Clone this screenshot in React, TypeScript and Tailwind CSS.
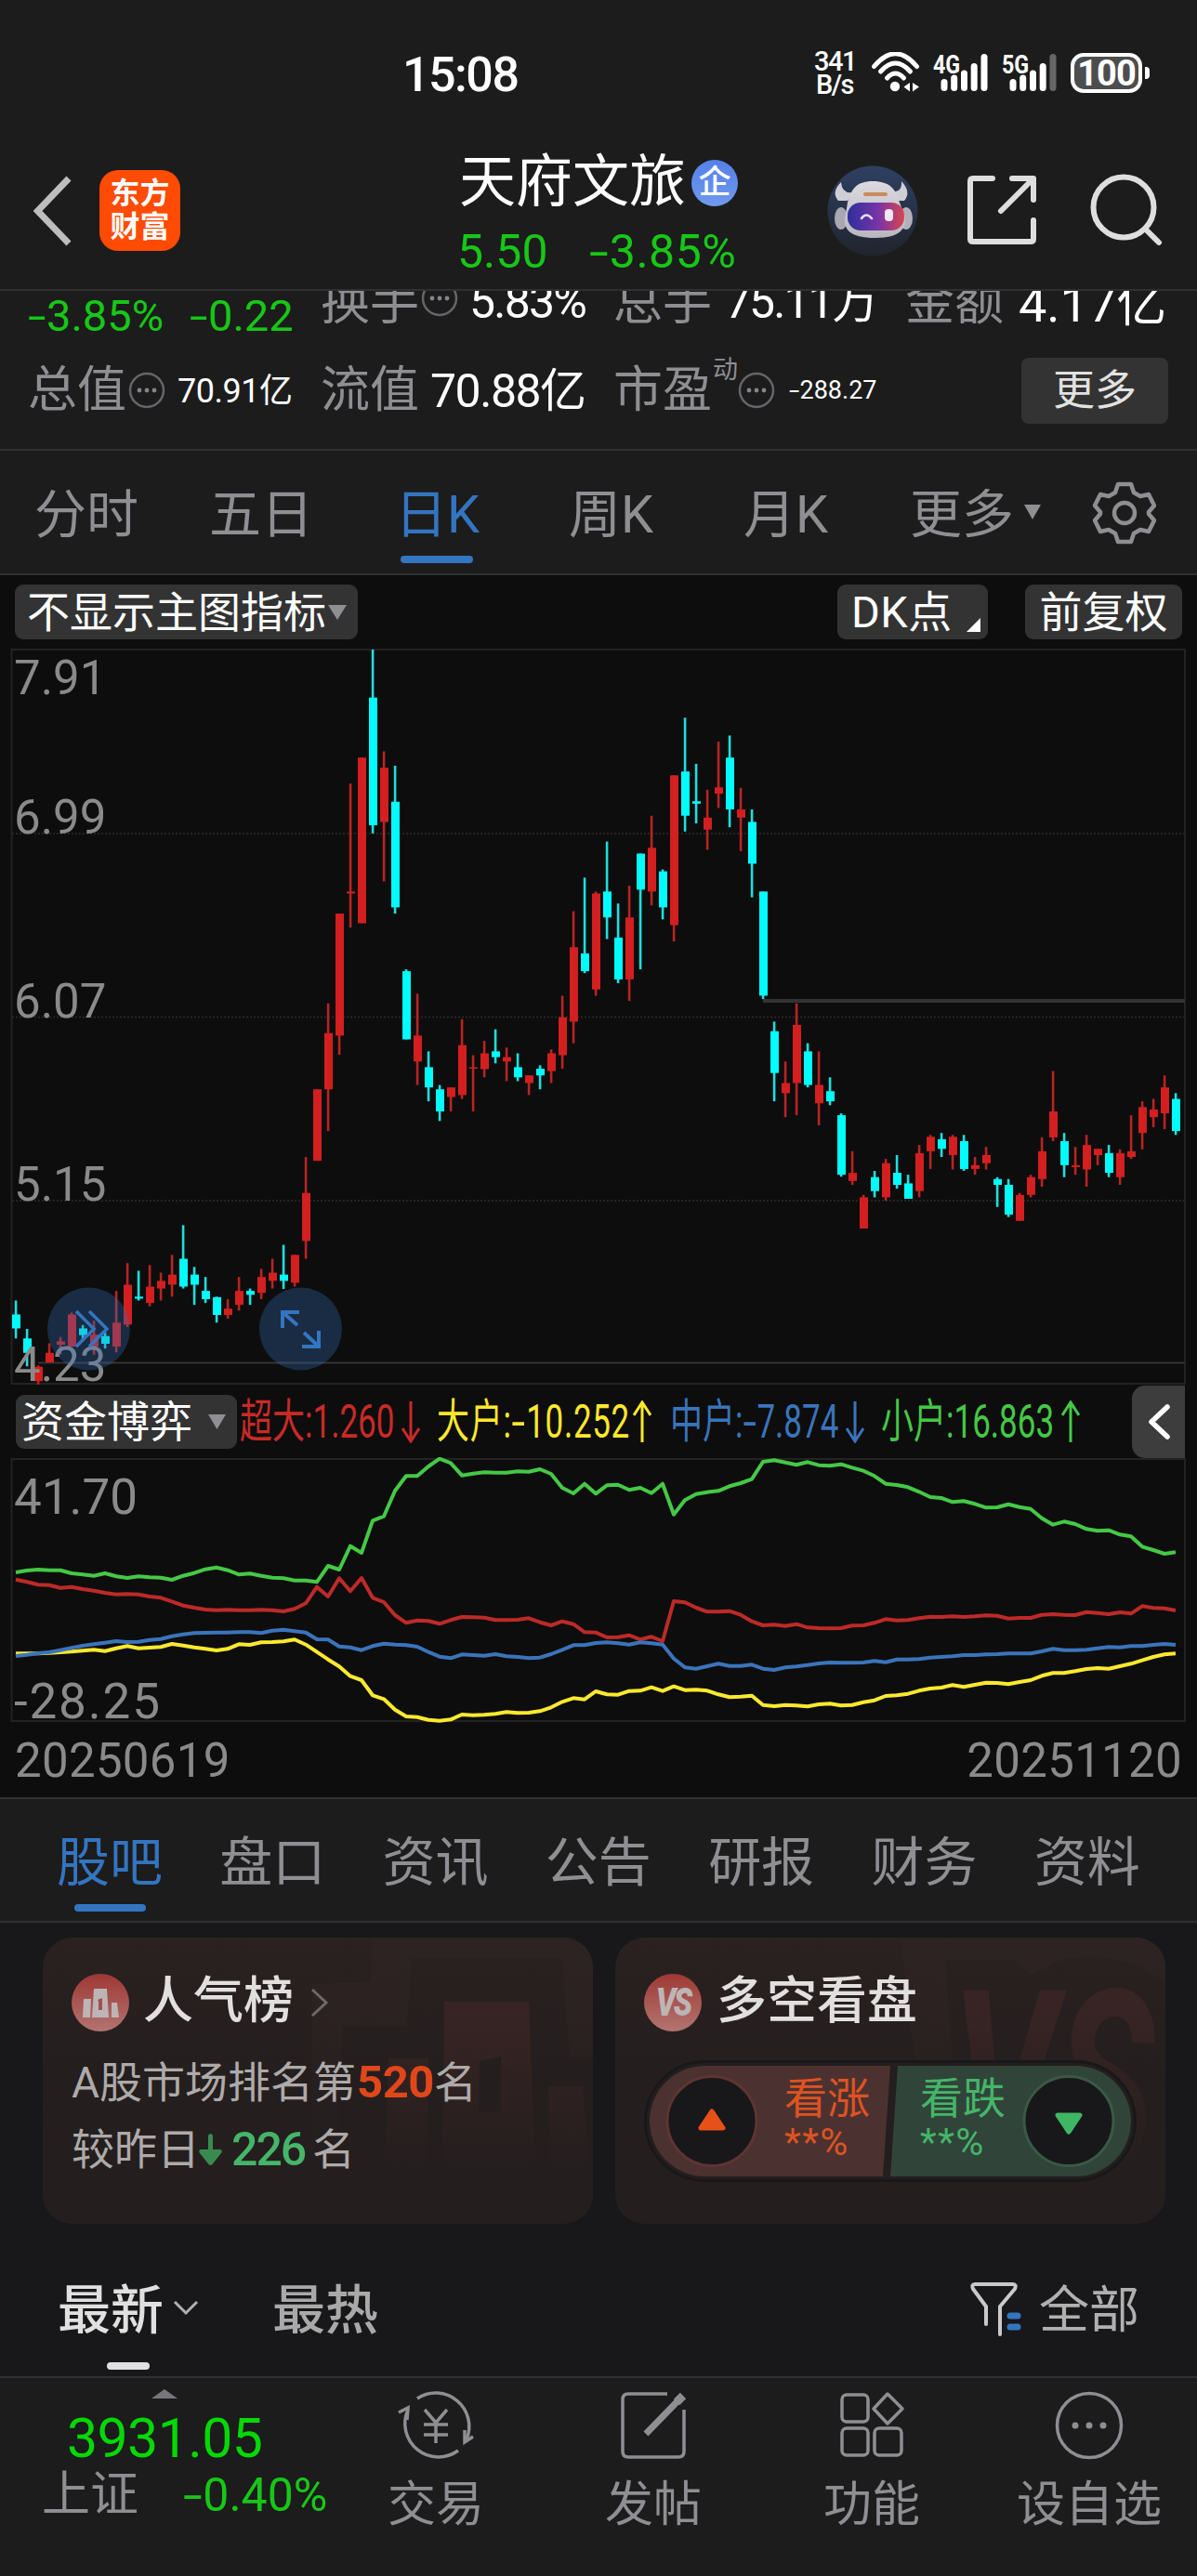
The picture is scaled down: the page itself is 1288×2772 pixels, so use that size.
import React from 'react';

// [up, high, body top, body bottom, low], one row per trading day
type Candle = [number, number, number, number, number];

const candles: Candle[] = [
  [0, 1373, 1402, 1431, 1452], [0, 1432, 1452, 1482, 1510], [1, 1508, 1511, 1541, 1548], [1, 1462, 1482, 1502, 1502],
  [1, 1449, 1458, 1465, 1485], [1, 1398, 1402, 1469, 1469], [0, 1424, 1431, 1445, 1455], [1, 1415, 1444, 1469, 1486],
  [0, 1440, 1447, 1463, 1473], [1, 1353, 1419, 1469, 1481], [1, 1295, 1340, 1423, 1428], [0, 1311, 1365, 1369, 1373],
  [1, 1299, 1344, 1378, 1385], [1, 1315, 1332, 1348, 1373], [1, 1278, 1319, 1340, 1365], [0, 1216, 1286, 1344, 1348],
  [0, 1303, 1319, 1340, 1382], [0, 1324, 1353, 1370, 1378], [0, 1365, 1366, 1403, 1419], [1, 1370, 1390, 1403, 1411],
  [1, 1324, 1353, 1382, 1394], [0, 1348, 1353, 1361, 1382], [1, 1307, 1324, 1357, 1370], [1, 1286, 1315, 1332, 1348],
  [0, 1257, 1319, 1332, 1349], [1, 1278, 1278, 1336, 1344], [1, 1074, 1149, 1249, 1286], [1, 933, 933, 1082, 1082],
  [1, 754, 816, 933, 1020], [1, 567, 567, 821, 861], [1, 296, 521, 525, 596], [1, 242, 242, 587, 587],
  [0, 17, 117, 383, 400], [1, 229, 263, 376, 500], [0, 259, 334, 554, 567], [0, 683, 687, 829, 829],
  [1, 734, 821, 875, 924], [0, 854, 887, 929, 958], [0, 924, 933, 979, 999], [1, 929, 929, 949, 979],
  [1, 787, 841, 945, 953], [1, 862, 887, 890, 979], [1, 832, 858, 891, 908], [0, 808, 854, 866, 879],
  [1, 846, 866, 875, 916], [0, 858, 887, 908, 916], [1, 904, 904, 920, 945], [0, 883, 890, 904, 933],
  [1, 850, 858, 895, 920], [1, 738, 783, 862, 890], [1, 562, 637, 792, 837], [0, 492, 650, 687, 691],
  [1, 521, 525, 725, 738], [0, 417, 521, 575, 620], [0, 546, 617, 704, 712], [1, 509, 575, 704, 749],
  [0, 442, 442, 517, 683], [1, 363, 430, 521, 550], [0, 475, 479, 554, 579], [1, 279, 279, 591, 625],
  [0, 159, 271, 363, 396], [0, 255, 333, 338, 379], [1, 309, 367, 392, 434], [1, 209, 304, 317, 347],
  [0, 196, 242, 350, 387], [1, 305, 350, 367, 437], [0, 350, 376, 463, 533], [0, 521, 521, 738, 745],
  [0, 792, 812, 899, 958], [1, 875, 920, 941, 991], [1, 754, 799, 920, 987], [0, 837, 854, 924, 929],
  [1, 854, 924, 962, 1008], [0, 908, 937, 958, 966], [0, 983, 987, 1111, 1115], [1, 1062, 1107, 1124, 1132],
  [1, 1153, 1158, 1223, 1223], [0, 1103, 1116, 1145, 1158], [1, 1078, 1087, 1158, 1165], [0, 1070, 1107, 1132, 1140],
  [0, 1111, 1129, 1161, 1161], [1, 1049, 1066, 1145, 1158], [1, 1028, 1032, 1062, 1099], [0, 1024, 1037, 1057, 1074],
  [1, 1028, 1032, 1070, 1100], [0, 1028, 1041, 1099, 1103], [1, 1074, 1091, 1099, 1111], [1, 1053, 1070, 1087, 1100],
  [0, 1116, 1120, 1132, 1178], [0, 1120, 1132, 1194, 1199], [1, 1149, 1153, 1207, 1207], [1, 1111, 1116, 1153, 1158],
  [1, 1033, 1062, 1120, 1136], [1, 895, 979, 1033, 1041], [0, 1024, 1041, 1091, 1116], [1, 1053, 1091, 1095, 1111],
  [1, 1028, 1049, 1100, 1136], [1, 1057, 1057, 1070, 1091], [0, 1049, 1066, 1107, 1116], [1, 1058, 1066, 1116, 1132],
  [1, 987, 1062, 1074, 1078], [1, 958, 970, 1024, 1058], [1, 953, 975, 991, 1012], [1, 904, 929, 983, 1016],
  [0, 941, 953, 1020, 1028],
];

const small = [
  636, 630, 627, 629, 629, 639, 643, 647, 639, 649, 654, 649, 652, 653, 660, 647, 638, 626, 620, 629, 643, 640, 647, 653, 655, 662,
  662, 667, 615, 627, 551, 573, 469, 455, 373, 325, 325, 294, 269, 283, 323, 317, 313, 314, 314, 310, 311, 303, 318, 363, 381, 350,
  382, 355, 353, 370, 363, 380, 350, 449, 403, 383, 377, 373, 358, 348, 335, 279, 274, 281, 289, 280, 290, 292, 287, 298, 308, 325,
  350, 354, 361, 376, 393, 396, 409, 406, 415, 427, 426, 416, 425, 431, 461, 482, 472, 480, 496, 502, 500, 514, 520, 553, 564, 576, 571,
];
const huge = [
  659, 667, 676, 677, 686, 683, 690, 695, 702, 707, 706, 707, 714, 718, 730, 743, 750, 756, 758, 757, 758, 758, 757, 758, 762, 754,
  736, 683, 714, 655, 697, 654, 718, 732, 774, 799, 791, 793, 802, 790, 780, 781, 782, 790, 790, 789, 784, 797, 807, 794, 803, 829,
  830, 846, 845, 839, 853, 844, 858, 729, 733, 750, 763, 763, 761, 773, 794, 807, 805, 809, 803, 814, 816, 817, 816, 808, 807, 799,
  787, 791, 790, 784, 779, 780, 778, 780, 778, 775, 776, 785, 783, 783, 773, 771, 773, 774, 764, 767, 771, 765, 769, 745, 751, 752, 759,
];
const medium = [
  906, 902, 897, 894, 887, 880, 873, 868, 863, 858, 861, 860, 854, 851, 842, 836, 832, 831, 830, 830, 829, 829, 832, 824, 821, 826,
  830, 852, 853, 875, 878, 887, 874, 866, 869, 871, 876, 893, 908, 913, 901, 903, 905, 900, 907, 909, 913, 911, 900, 886, 871, 871,
  864, 862, 865, 869, 862, 865, 869, 914, 943, 947, 939, 931, 938, 938, 934, 947, 951, 943, 940, 935, 930, 927, 928, 928, 927, 922,
  926, 917, 917, 916, 911, 909, 907, 903, 903, 901, 900, 898, 898, 898, 891, 883, 887, 887, 886, 881, 877, 878, 874, 874, 870, 867, 870,
];
const large = [
  898, 898, 898, 896, 894, 892, 889, 886, 890, 881, 874, 881, 879, 877, 867, 872, 878, 883, 888, 883, 868, 870, 862, 861, 859, 853,
  869, 893, 917, 940, 971, 984, 1033, 1045, 1079, 1101, 1103, 1112, 1115, 1111, 1095, 1097, 1096, 1093, 1087, 1090, 1089, 1084, 1072,
  1054, 1042, 1046, 1020, 1030, 1031, 1019, 1018, 1007, 1019, 1004, 1016, 1015, 1018, 1030, 1039, 1037, 1034, 1064, 1068, 1064, 1066,
  1069, 1062, 1060, 1066, 1064, 1055, 1049, 1035, 1033, 1028, 1018, 1011, 1008, 1000, 1006, 999, 992, 993, 997, 990, 984, 970, 961,
  961, 955, 948, 945, 947, 939, 931, 920, 909, 901, 898,
];

const dayX = (i: number) => 17 + i * 12;
const priceY = (v: number) => (v - 17) / 1.9358 + 1;
const flowPoints = (values: number[]) => values.map((v, i) => `${dayX(i)},${((v - 270) / 3 + 2).toFixed(1)}`).join(' ');

// Roboto's hyphen is too short for a minus sign
function Neg() {
  return <span className="mr-[.15em] inline-block origin-left scale-x-[1.5]">-</span>;
}

function Dots({ className }: { className: string }) {
  return (
    <svg width="40" height="40" viewBox="0 0 40 40" className={className}>
      <circle cx="20" cy="20" r="18" fill="none" stroke="#65656a" strokeWidth="2.5" />
      <circle cx="12" cy="20" r="2.4" fill="#85858a" />
      <circle cx="20" cy="20" r="2.4" fill="#85858a" />
      <circle cx="28" cy="20" r="2.4" fill="#85858a" />
    </svg>
  );
}

function Signal({ label, weak }: { label: string; weak?: boolean }) {
  return (
    <div className="relative h-[44px] w-[60px]">
      <span className="absolute left-0 top-0 origin-left scale-x-[.83] text-[28px] font-bold leading-none">{label}</span>
      <svg width="60" height="44" viewBox="0 0 60 44" className="absolute left-0 top-0">
        <rect x="8.500" y="29" width="7" height="13" rx="3.500" fill="#fff" />
        <rect x="19.200" y="24.500" width="7" height="17.500" rx="3.500" fill="#fff" />
        <rect x="30" y="19.500" width="7" height="22.500" rx="3.500" fill="#fff" />
        <rect x="40.700" y="12" width="7" height="30" rx="3.500" fill="#fff" />
        <rect x="51.500" y="2" width="7" height="40" rx="3.500" fill={weak ? '#666' : '#fff'} />
      </svg>
    </div>
  );
}

function StatusBar() {
  return (
    <div className="flex h-[140px] items-start text-white">
      <div className="ml-[433px] mt-[55px] w-[443px] text-[52px] font-medium leading-none tracking-[-1.500px]">15:08</div>
      <div className="mt-[54px] w-[62px] text-[29px] font-medium leading-[25px] tracking-[-1.500px]">
        <div>341</div>
        <div className="pl-[2px]">B/s</div>
      </div>
      <svg width="52" height="44" viewBox="0 0 52 44" className="mt-[56px]" fill="none" stroke="#fff" strokeWidth="5" strokeLinecap="round">
        <path d="M2.500 18.500 Q25.500 -9 48.500 18.500" transform="translate(0 -3)" />
        <path d="M9.500 22 Q25.500 4 41.500 22" transform="translate(0 -1)" />
        <path d="M16.500 28 Q25.500 18 34.500 28" />
        <circle cx="25" cy="37" r="5.200" fill="#fff" stroke="none" />
        <path d="M41 33v9.500l-6.500-5zM44 33v9.500l7-5z" fill="#fff" stroke="none" />
      </svg>
      <div className="ml-[14px] mt-[56px]"><Signal label="4G" /></div>
      <div className="ml-[14px] mt-[56px]"><Signal label="5G" weak /></div>
      <div className="ml-[14px] mt-[57px] flex h-[43px] w-[77px] items-center justify-center rounded-[14px] border-[4px] border-white bg-[#4d4d4d] text-[38px] font-bold leading-none tracking-[-1px]">
        100
      </div>
      <div className="ml-[3px] mt-[72px] h-[13px] w-[5px] rounded-r-[4px] bg-white" />
    </div>
  );
}

function Robot() {
  return (
    <svg width="98" height="98" viewBox="0 0 98 98">
      <defs>
        <linearGradient id="sky" x1="0" y1="0" x2="0" y2="1">
          <stop offset="0" stopColor="#2e4063" />
          <stop offset="1" stopColor="#20242d" />
        </linearGradient>
        <linearGradient id="visor" x1="0" y1="0" x2="1" y2="0">
          <stop offset="0" stopColor="#2b2f9c" />
          <stop offset=".55" stopColor="#7a34a8" />
          <stop offset="1" stopColor="#d8454f" />
        </linearGradient>
        <linearGradient id="shell" x1="0" y1="0" x2="0" y2="1">
          <stop offset="0" stopColor="#dcdae0" />
          <stop offset="1" stopColor="#b9b6be" />
        </linearGradient>
      </defs>
      <circle cx="49" cy="49" r="48.500" fill="url(#sky)" />
      <ellipse cx="15" cy="57" rx="7" ry="12" fill="#a9a7b2" />
      <ellipse cx="85" cy="57" rx="7" ry="12" fill="#b3b0ba" />
      <path d="M15 18 Q4 29 12 38 L22 38 L28 29 Q16 31 15 18Z" fill="#d0ced5" />
      <path d="M80 17 Q91 29 83 38 L73 38 L68 28 Q81 30 80 17Z" fill="#d0ced5" />
      <path d="M49 17 C68 17 74 26 78 40 L84 56 C85 70 76 78 52 78 C30 78 18 72 19 58 L22 40 C26 26 31 17 49 17Z" fill="url(#shell)" />
      <rect x="39" y="29" width="26" height="4" rx="2" fill="#c98a5c" />
      <rect x="22" y="40" width="61" height="30" rx="14" fill="url(#visor)" />
      <path d="M37 57 Q42 50 48 57" fill="none" stroke="#dfe0ff" strokeWidth="2.600" strokeLinecap="round" />
      <rect x="62" y="47" width="9" height="13" rx="4" fill="#f1e6f2" />
    </svg>
  );
}

function Header() {
  return (
    <header className="flex h-[173px] items-start border-b-2 border-[#303032]">
      <svg width="44" height="76" viewBox="0 0 44 76" className="ml-[34px] mt-[49px]" fill="none" stroke="#bdbdbd" strokeWidth="7">
        <path d="M40 3 L6.500 38 L40 73" />
      </svg>
      <div className="ml-[29px] mt-[43px] h-[87px] w-[87px] rounded-[20px] bg-[#ff4b04] pt-[7px] text-center text-[32px] font-bold leading-[36px] text-white">
        <div>东方</div>
        <div>财富</div>
      </div>
      <div className="ml-[300px] mt-[26px] w-[396px]">
        <div className="flex items-center">
          <span className="w-[244px] text-[61px] leading-none text-white">天府文旅</span>
          <span className="ml-[6px] flex h-[50px] w-[50px] items-center justify-center rounded-full bg-linear-to-b from-[#5580e8] to-[#7099ee] pb-[1px] text-[35px] font-medium leading-none text-white">
            企
          </span>
        </div>
        <div className="mt-[19px] flex text-[50px] leading-none text-[#17c717]">
          <span className="ml-[-2px] w-[142px]">5.50</span>
          <span className="tracking-[.5px]"><Neg />3.85%</span>
        </div>
      </div>
      <div className="mt-[38px]"><Robot /></div>
      <svg width="80" height="80" viewBox="0 0 80 80" className="ml-[50px] mt-[47px]" fill="none" stroke="#dedede" strokeWidth="6" strokeLinecap="round" strokeLinejoin="round">
        <path d="M30 5 H9 Q6 5 6 8 V70 Q6 73 9 73 H71 Q74 73 74 70 V50" />
        <path d="M51 5 H74 V28 M73 6 L39 40" />
      </svg>
      <svg width="84" height="84" viewBox="0 0 84 84" className="ml-[53px] mt-[44px]" fill="none" stroke="#dedede" strokeWidth="6" strokeLinecap="round">
        <circle cx="38" cy="39" r="32.500" />
        <path d="M62 63 L76 77" />
      </svg>
    </header>
  );
}

function Quotes() {
  return (
    <section className="h-[172px] overflow-hidden border-b-2 border-[#303032] text-[53px] leading-none text-[#8e8e93]">
      <div className="-mt-[13px] flex h-[84px] items-start whitespace-nowrap">
        <div className="ml-[30px] mt-[16px] flex w-[315px] text-[47px] text-[#17c717]">
          <span className="w-[174px]"><Neg />3.85%</span>
          <span><Neg />0.22</span>
        </div>
        <span>换手</span>
        <Dots className="ml-[2px] mt-[1px]" />
        <span className="ml-[12px] w-[155px] text-[50px] tracking-[-1.800px] text-white">5.83%</span>
        <span className="w-[120px]">总手</span>
        <span className="w-[194px] text-[50px] tracking-[-2px] text-white">75.11万</span>
        <span className="w-[122px]">金额</span>
        <span className="mt-[1px] text-[54px] text-white">4.17亿</span>
      </div>
      <div className="flex h-[73px] items-center whitespace-nowrap">
        <span className="ml-[30px]">总值</span>
        <Dots className="mb-[2px] ml-[2px]" />
        <span className="ml-[13px] w-[154px] text-[36px] tracking-[-.5px] text-white">70.91亿</span>
        <span className="w-[118px]">流值</span>
        <span className="w-[197px] text-[50px] tracking-[-1.500px] text-white">70.88亿</span>
        <span>市盈</span>
        <span className="mb-[44px] ml-[1px] text-[27px]">动</span>
        <Dots className="mb-[2px]" />
        <span className="ml-[15px] w-[250px] text-[27px] text-white"><Neg />288.27</span>
        <span className="flex h-[71px] w-[158px] items-center justify-center rounded-[8px] bg-[#333] text-[45px] text-[#e2e2e2]">更多</span>
      </div>
    </section>
  );
}

function PeriodTabs() {
  return (
    <nav className="flex h-[134px] items-start border-b-2 border-[#303032] pt-[41px] text-[56px] leading-none text-[#8e8e93]">
      <span className="ml-[37px] w-[188px]">分时</span>
      <span className="w-[200px]">五日</span>
      <span className="flex w-[187px] flex-col text-[#3375c0]">
        日K
        <i className="ml-[6px] mt-[16px] h-[8px] w-[78px] rounded-full bg-[#3375c0]" />
      </span>
      <span className="w-[188px]">周K</span>
      <span className="w-[179px]">月K</span>
      <span className="w-[123px]">更多</span>
      <svg width="18" height="16" viewBox="0 0 18 16" className="mt-[17px]"><path d="M0 0h18l-9 16z" fill="#8e8e93" /></svg>
      <svg width="68" height="68" viewBox="0 0 68 68" className="ml-[56px] mt-[-8px]" fill="none" stroke="#8e8e93" strokeWidth="4.500" strokeLinejoin="round">
        <path d="M27 3 H41 L44 12 L51 16 L60 14 L66 26 L60 33 V35 L66 42 L60 54 L51 52 L44 56 L41 65 H27 L24 56 L17 52 L8 54 L2 42 L8 35 V33 L2 26 L8 14 L17 16 L24 12 Z" />
        <circle cx="34" cy="34" r="11" />
      </svg>
    </nav>
  );
}

function CandleChart() {
  const labels: [string, number][] = [['7.91', 49], ['6.99', 199], ['6.07', 397], ['5.15', 594], ['4.23', 788]];
  return (
    <svg width="1288" height="792" viewBox="0 0 1288 792" className="block">
      <rect x="12.500" y="1" width="1262.500" height="790" fill="none" stroke="#232323" strokeWidth="2" />
      {[199, 396.500, 594].map((y) => (
        <line key={y} x1="13" x2="1275" y1={y} y2={y} stroke="#2c2c2c" strokeWidth="1.500" strokeDasharray="2 2" />
      ))}
      <rect x="821" y="377" width="454" height="4" fill="#333" />
      <rect x="41" y="767.500" width="1234" height="2" fill="#333" />
      {candles.map(([up, high, top, bottom, low], i) => {
        const x = dayX(i);
        return (
          <g key={i}>
            <rect x={x - 1.200} y={priceY(high)} width="2.600" height={priceY(low) - priceY(high)} fill={up ? '#b82424' : '#1fdede'} />
            <rect x={x - 4} y={priceY(top)} width="9" height={priceY(bottom) - priceY(top)} fill={up ? '#d31f1f' : '#00fdfd'} />
          </g>
        );
      })}
      {labels.map(([text, y]) => (
        <text key={text} x="15" y={y} fontSize="51" fill="#8a8a8a">{text}</text>
      ))}
      <g fill="none" stroke="#3375c0" strokeWidth="3.500">
        <circle cx="95.500" cy="732" r="44.500" fill="rgba(54,113,188,.32)" stroke="none" />
        <path d="M82 713 L101 732 L82 751 M96 713 L115 732 L96 751" />
        <circle cx="323.500" cy="732" r="44.500" fill="rgba(54,113,188,.32)" stroke="none" />
        <path d="M304 731 V714 H322 M304 714 L320 728 M325 751 H343 V734 M343 751 L327 736" strokeWidth="4" />
      </g>
    </svg>
  );
}

type FlowLabelProps = { name: string; value: string; negative?: boolean; up?: boolean; box: string; arrow: string };

function FlowLabel({ name, value, negative, up, box, arrow }: FlowLabelProps) {
  return (
    <div className={`relative shrink-0 ${box}`}>
      <span className="block origin-left scale-x-[.7] whitespace-nowrap text-[50px] leading-none">
        {name}:{negative && <Neg />}{value}
      </span>
      <svg width="20" height="46" viewBox="0 0 20 46" className={`absolute top-[2px] ${arrow}`} fill="none" stroke="currentColor" strokeWidth="3">
        <path d={up ? 'M10 45 V2 M1 16 L10 2 L19 16' : 'M10 1 V44 M1 30 L10 44 L19 30'} />
      </svg>
    </div>
  );
}

function Charts() {
  return (
    <section className="bg-[#0d0d0d]">
      <div className="flex h-[79px] items-start pt-[10px] text-[46px] leading-none text-white">
        <div className="ml-[16px] flex h-[59px] w-[369px] items-center rounded-[9px] bg-[#333] pl-[13px]">
          <span>不显示主图指标</span>
          <svg width="20" height="16" viewBox="0 0 20 16" className="ml-[2px] shrink-0"><path d="M0 0h20l-10 16z" fill="#8e8e93" /></svg>
        </div>
        <div className="ml-[516px] flex h-[59px] w-[162px] items-center rounded-[9px] bg-[#333] pl-[15px]">
          <span className="w-[124px] text-[47px] tracking-[.5px]">DK点</span>
          <svg width="15" height="15" viewBox="0 0 15 15" className="mt-[28px]"><path d="M15 0v15H0z" fill="#fff" /></svg>
        </div>
        <div className="ml-[40px] flex h-[59px] w-[169px] items-center justify-center rounded-[9px] bg-[#333]">
          <span>前复权</span>
        </div>
      </div>
      <CandleChart />
      <div className="flex h-[78px] items-start">
        <div className="ml-[17px] mt-[11px] flex h-[58px] w-[238px] items-center rounded-[9px] bg-[#333] pl-[6px] text-[46px] leading-none text-white">
          <span className="w-[201px]">资金博弈</span>
          <svg width="19" height="16" viewBox="0 0 19 16"><path d="M0 0h19l-9.500 16z" fill="#8e8e93" /></svg>
        </div>
        <div className="ml-[3px] mt-[15px] flex w-[960px]">
          <div className="text-[#c92a26]"><FlowLabel name="超大" value="1.260" box="w-[212px]" arrow="left-[174px]" /></div>
          <div className="tracking-[1px] text-[#fde82c]"><FlowLabel name="大户" value="10.252" negative up box="w-[251px]" arrow="left-[211px]" /></div>
          <div className="text-[#3a74bb]"><FlowLabel name="中户" value="7.874" negative box="w-[227px]" arrow="left-[189px]" /></div>
          <div className="text-[#45c846]"><FlowLabel name="小户" value="16.863" up box="w-[220px]" arrow="left-[194px]" /></div>
        </div>
        <div className="mt-[1px] flex h-[78px] w-[57px] items-center justify-center rounded-l-[14px] bg-[#3d3d3d]">
          <svg width="26" height="40" viewBox="0 0 26 40" fill="none" stroke="#fff" strokeWidth="5.500" strokeLinecap="round" strokeLinejoin="round">
            <path d="M22 4 L5 20 L22 36" />
          </svg>
        </div>
      </div>
      <svg width="1288" height="288" viewBox="0 0 1288 288" className="block">
        <rect x="12.500" y="2" width="1262.500" height="282" fill="none" stroke="#232323" strokeWidth="2" />
        <text x="15" y="60.500" fontSize="53" fill="#8a8a8a">41.70</text>
        <text x="15" y="281" fontSize="53" fill="#8a8a8a" textLength="157">-28.25</text>
        <g fill="none" strokeWidth="4" strokeLinejoin="round">
          <polyline points={flowPoints(huge)} stroke="#bd2a28" />
          <polyline points={flowPoints(large)} stroke="#fbe92e" />
          <polyline points={flowPoints(medium)} stroke="#3a74bb" />
          <polyline points={flowPoints(small)} stroke="#45c846" />
        </g>
      </svg>
      <div className="flex h-[78px] justify-between px-[16px] pt-[13px] text-[51px] leading-none tracking-[.3px] text-[#8a8a8a]">
        <span>20250619</span>
        <span>20251120</span>
      </div>
    </section>
  );
}

function SectionTabs() {
  const tabs = ['盘口', '资讯', '公告', '研报', '财务', '资料'];
  return (
    <nav className="flex h-[135px] items-start border-y-2 border-[#303032] pl-[61px] pt-[40px] text-[57px] leading-none text-[#8e8e93]">
      <span className="w-[175.500px] text-[#3375c0]">
        股吧
        <i className="ml-[19px] mt-[16px] block h-[8px] w-[77px] rounded-full bg-[#3375c0]" />
      </span>
      {tabs.map((tab) => (
        <span key={tab} className="w-[175.500px]">{tab}</span>
      ))}
    </nav>
  );
}

function RankCard() {
  return (
    <div className="relative h-[308px] w-[592px] overflow-hidden rounded-[32px] bg-linear-to-b from-[#2a2120] via-[#241e1e] to-[#241f1e]">
      <svg width="592" height="308" viewBox="0 0 592 308" className="absolute left-0 top-0">
        <defs>
          <linearGradient id="bars" x1="0" y1="68" x2="0" y2="250" gradientUnits="userSpaceOnUse">
            <stop offset="0" stopColor="#392424" />
            <stop offset="1" stopColor="#392424" stopOpacity="0" />
          </linearGradient>
          <linearGradient id="edge" x1="0" y1="0" x2="0" y2="250" gradientUnits="userSpaceOnUse">
            <stop offset="0" stopColor="#2d2322" />
            <stop offset="1" stopColor="#2d2322" stopOpacity="0" />
          </linearGradient>
        </defs>
        <path d="M354 0H592V131H567L559 22H396L392 96H323L315 250H288L290 50L353 48Z" fill="url(#edge)" />
        <path d="M432 69H523L530 251H430Z M470 133L493 128V187H469Z" fill="url(#bars)" fillRule="evenodd" />
        <path d="M372 130H415L413 250H368Z M544 160H581L588 250H546Z" fill="url(#bars)" />
      </svg>
      <div className="relative pl-[31px] pt-[39px]">
        <div className="flex items-center">
          <svg width="62" height="62" viewBox="0 0 62 62">
            <defs>
              <linearGradient id="badge" x1="0" y1="0" x2="0" y2="1">
                <stop offset="0" stopColor="#9e3835" />
                <stop offset="1" stopColor="#b27470" />
              </linearGradient>
            </defs>
            <circle cx="31" cy="31" r="31" fill="url(#badge)" />
            <path d="M13 27h8l-1 20h-8zM24 16h14l2 31H22zM43 31h6l2 16h-8z" fill="#bdb5b5" />
            <path d="M28 28l5-2v13h-4v-9z" fill="#a3504d" />
          </svg>
          <span className="mb-[2px] ml-[15px] text-[54px] font-medium leading-none text-[#e2dfdf]">人气榜</span>
          <svg width="20" height="32" viewBox="0 0 20 32" className="ml-[18px]" fill="none" stroke="#6e6867" strokeWidth="3"><path d="M2 2L17 16L2 30" /></svg>
        </div>
        <div className="mt-[30px] flex items-center text-[46px] leading-none text-[#aeaaaa]">
          <span>A股市场排名第</span>
          <b className="ml-[1px] w-[83px] text-[49px] tracking-[-.5px] text-[#e0471a]">520</b>
          <span>名</span>
        </div>
        <div className="mt-[23px] flex items-center text-[46px] leading-none text-[#aeaaaa]">
          <span>较昨日</span>
          <svg width="25" height="36" viewBox="0 0 25 36" className="ml-[-1px]"><path d="M10 3Q12.500 -1 15 3V18H23Q26 19 24 22L14.500 34Q12.500 36 10.500 34L1 22Q-1 19 2 18H10Z" fill="#3a8a50" /></svg>
          <b className="ml-[10px] w-[87px] text-[50px] font-medium tracking-[-2px] text-[#45b56a]">226</b>
          <span>名</span>
        </div>
      </div>
    </div>
  );
}

function VoteCard() {
  return (
    <div className="relative h-[308px] w-[592px] overflow-hidden rounded-[32px] bg-linear-to-b from-[#2a2120] via-[#241e1e] to-[#241f1e]">
      <svg width="592" height="308" viewBox="0 0 592 308" className="absolute left-0 top-0">
        <path d="M307 0H592V48Q540 10 480 24L447 40L430 24H355L368 200L375 262L338 270Z" fill="url(#edge)" />
        <text x="362" y="250" fontSize="272" fontWeight="700" fontStyle="italic" fill="url(#bars)" textLength="218" lengthAdjust="spacingAndGlyphs">VS</text>
      </svg>
      <div className="relative pl-[31px] pt-[39px]">
        <div className="flex items-center">
          <div className="flex h-[62px] w-[62px] items-center justify-center rounded-full bg-linear-to-b from-[#9e3835] to-[#b27470] text-[42px] font-black italic leading-none tracking-[-3px] text-[#bdb5b5]">
            <span className="scale-x-[.8]">VS</span>
          </div>
          <span className="mb-[2px] ml-[16px] text-[54px] font-medium leading-none text-[#e2dfdf]">多空看盘</span>
        </div>
        <div className="mt-[31px] flex h-[131px] w-[530px] items-center justify-center rounded-full border-[3px] border-[#18181a] bg-[#241e1e]">
          <div className="relative flex h-[119px] w-[518px] justify-between overflow-hidden rounded-full">
            <svg width="518" height="119" viewBox="0 0 518 119" className="absolute left-0 top-0">
              <path d="M0 0H259L251 119H0Z" fill="#4b3230" />
              <path d="M267 0H518V119H259Z" fill="#314439" />
              <circle cx="67" cy="59.500" r="48" fill="#18181a" stroke="#5e3532" strokeWidth="3" />
              <circle cx="451" cy="59.500" r="48" fill="#18181a" stroke="#3a5945" strokeWidth="3" />
              <path d="M67 49L79 67H55Z" fill="#e8501a" stroke="#e8501a" strokeWidth="5" strokeLinejoin="round" />
              <path d="M451 71L463 53H439Z" fill="#3fb664" stroke="#3fb664" strokeWidth="5" strokeLinejoin="round" />
            </svg>
            <div className="relative ml-[145px] pt-[12px] leading-none text-[#de5322]">
              <div className="w-[92px] text-[46px]">看涨</div>
              <div className="mt-[4px] text-[41px] tracking-[1.500px]">**%</div>
            </div>
            <div className="relative mr-[135px] pt-[12px] leading-none text-[#45b56a]">
              <div className="w-[92px] text-[46px]">看跌</div>
              <div className="mt-[4px] text-[41px] tracking-[1.500px]">**%</div>
            </div>
          </div>
        </div>
      </div>
    </div>
  );
}

function FeedTabs() {
  return (
    <div className="flex h-[166px] items-start border-b-2 border-[#303032] pt-[65px] text-[57px] font-medium leading-none">
      <div className="ml-[62px] w-[124px] text-[#e0e0e0]">
        最新
        <i className="ml-[53px] mt-[27px] block h-[8px] w-[46px] rounded-full bg-[#e0e0e0]" />
      </div>
      <svg width="28" height="18" viewBox="0 0 28 18" className="mt-[17px]" fill="none" stroke="#b0b0b0" strokeWidth="3"><path d="M2 2L14 14L26 2" /></svg>
      <span className="ml-[79px] w-[751px] text-[#a9a9a9]">最热</span>
      <svg width="56" height="60" viewBox="0 0 56 60" className="mt-[-3px]" fill="none" stroke="#c9c9c9" strokeWidth="4" strokeLinecap="round" strokeLinejoin="round">
        <path d="M17 46V27L3 8Q1 3 5 3H46Q50 3 48 8L32 27V57" />
        <path d="M43 37h8M43 49h8" stroke="#3375c0" strokeWidth="7" />
      </svg>
      <span className="ml-[18px] mt-[2px] text-[54px] font-normal text-[#b0b0b0]">全部</span>
    </div>
  );
}

function BottomBar() {
  return (
    <footer className="flex h-[213px] items-start bg-[#1c1c1c] text-[52px] leading-none text-[#8e8e93]">
      <div className="w-[400px]">
        <svg width="28" height="10" viewBox="0 0 28 10" className="ml-[163px] mt-[12px]"><path d="M14 0l14 10H0z" fill="#77777b" /></svg>
        <div className="ml-[72px] mt-[13px] text-[59px] tracking-[-.6px] text-[#05d805]">3931.05</div>
        <div className="mt-[6px] flex items-center">
          <span className="ml-[45px] w-[152px]">上证</span>
          <span className="text-[50px] text-[#17c717]"><Neg />0.40%</span>
        </div>
      </div>
      <div className="mt-[12px] flex w-[138px] flex-col items-center">
        <svg width="84" height="78" viewBox="0 0 84 78" fill="none" stroke="#8e8e93" strokeWidth="3.500">
          <path d="M22 10A36 36 0 0 1 75 54M66 66A36 36 0 0 1 12 22" />
          <path d="M2 25L12 20L11 33M82 51L73 57L73 44" />
          <path d="M30 22L42 36L54 22M42 36V58M29 38H55M29 49H55" />
        </svg>
        <span className="mt-[21px]">交易</span>
      </div>
      <div className="ml-[96px] mt-[12px] flex w-[138px] flex-col items-center">
        <svg width="76" height="78" viewBox="0 0 76 78" fill="none" stroke="#8e8e93" strokeWidth="3.500">
          <path d="M53 5H11Q5 5 5 11V67Q5 73 11 73H65Q71 73 71 67V22" />
          <path d="M30 48L64 13" strokeWidth="7" />
          <path d="M63 14L70 7" strokeWidth="9" />
        </svg>
        <span className="mt-[21px]">发帖</span>
      </div>
      <div className="ml-[97px] mt-[12px] flex w-[138px] flex-col items-center">
        <svg width="76" height="78" viewBox="0 0 76 78" fill="none" stroke="#8e8e93" strokeWidth="3.500" strokeLinejoin="round">
          <rect x="6" y="6" width="28" height="29" rx="5" />
          <rect x="6" y="42" width="28" height="29" rx="5" />
          <rect x="41" y="42" width="29" height="29" rx="5" />
          <path d="M55 5L71 21L55 37L40 21Z" />
        </svg>
        <span className="mt-[21px]">功能</span>
      </div>
      <div className="ml-[84px] mt-[12px] flex w-[162px] flex-col items-center">
        <svg width="76" height="78" viewBox="0 0 76 78">
          <circle cx="38" cy="39" r="34.500" fill="none" stroke="#8e8e93" strokeWidth="3.500" />
          <circle cx="23" cy="39" r="3.500" fill="#8e8e93" />
          <circle cx="38" cy="39" r="3.500" fill="#8e8e93" />
          <circle cx="53" cy="39" r="3.500" fill="#8e8e93" />
        </svg>
        <span className="mt-[21px]">设自选</span>
      </div>
    </footer>
  );
}

function App() {
  return (
    <div className="h-[2772px] w-[1288px] overflow-hidden bg-[#1c1c1c] font-['Roboto','Noto_Sans_CJK_SC',sans-serif]">
      <StatusBar />
      <Header />
      <Quotes />
      <PeriodTabs />
      <Charts />
      <SectionTabs />

      {/* Community */}
      <main className="bg-[#18181a]">
        <div className="flex h-[324px] gap-[24px] pl-[46px] pt-[16px]">
          <RankCard />
          <VoteCard />
        </div>
        <FeedTabs />
      </main>

      <BottomBar />
    </div>
  );
}

export default App;
